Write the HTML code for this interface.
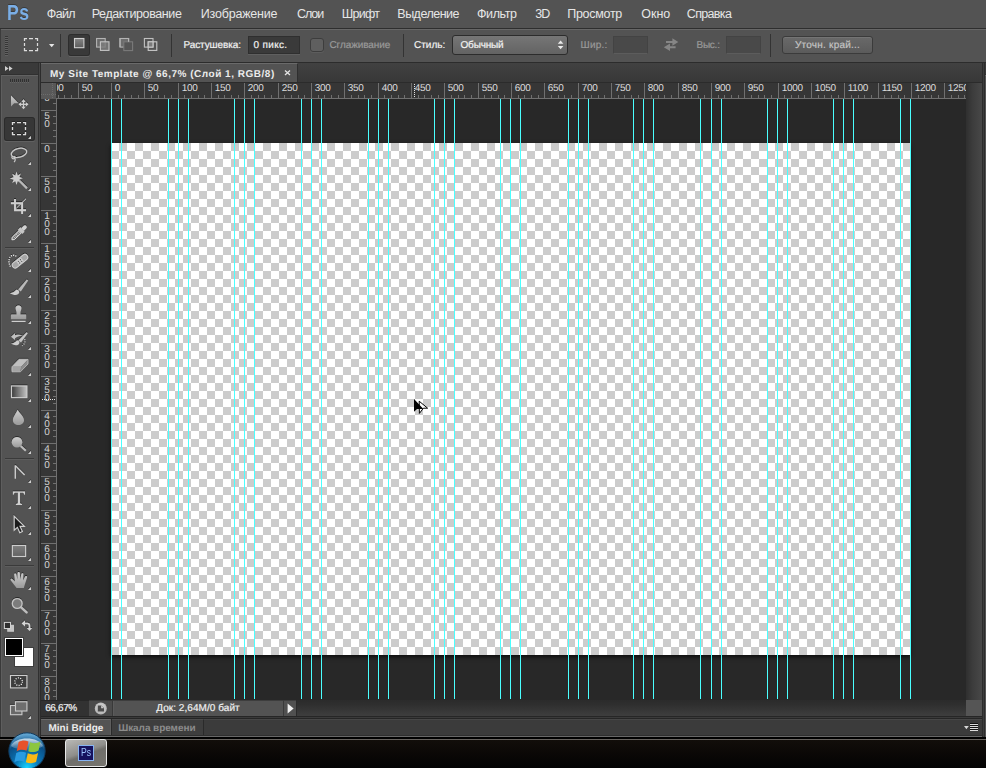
<!DOCTYPE html>
<html><head><meta charset="utf-8"><title>My Site Template</title>
<style>
html,body{margin:0;padding:0;background:#535353;}
body{width:986px;height:768px;overflow:hidden;font-family:"Liberation Sans",sans-serif;}
#app{position:relative;width:986px;height:768px;overflow:hidden;background:#535353;color:#e0e0e0;}
#app div,#app span,#app svg{position:absolute;box-sizing:border-box;}
/* menu */
#menubar{left:0;top:0;width:986px;height:28px;background:#535353;}
#pslogo{left:7px;top:1px;font-size:21.5px;font-weight:bold;color:#7aaee6;line-height:24px;transform:scaleX(.82);transform-origin:0 0;letter-spacing:0.5px;text-shadow:0 -1px 0 rgba(0,0,0,.3);}
.mi{top:6px;font-size:12.5px;line-height:16px;color:#e6e6e6;white-space:nowrap;}
/* options bar */
#optbar{left:0;top:28px;width:986px;height:34px;background:#535353;border-top:1px solid #2e2e2e;}
#optbar .hi{left:0;top:0;width:986px;height:1px;background:#676767;}
.sep{width:1px;background:#333;top:5px;height:23px;}
.ol{text-rendering:geometricPrecision;font-size:10px;line-height:14px;top:10px;white-space:nowrap;color:#f2f2f2;-webkit-text-stroke:0.2px currentColor;}
.dis{color:#9a9a9a;}
/* tools */
#tools{left:0;top:62px;width:39px;height:676px;background:#535353;}
/* doc */
#doc{left:0;top:0;width:986px;height:768px;}
#tabbar{left:41px;top:63px;width:941px;height:20px;background:linear-gradient(#414141,#383838);border-bottom:1px solid #2b2b2b;}
#tab{left:0;top:0;width:257px;height:19px;background:#535353;border-top:1px solid #6a6a6a;border-right:1px solid #2f2f2f;}


#canvasarea{left:57px;top:99px;width:909px;height:601px;background:#282828;overflow:hidden;}
#checker{left:54px;top:44px;width:799px;height:512px;background:repeating-conic-gradient(#cccccc 0 25%,#ffffff 0 50%) 0 0/16px 16px;}
#shadow{left:54px;top:44px;width:799px;height:512px;box-shadow:0 2px 4px rgba(0,0,0,.7);}
#guides{left:-57px;top:0;}
#hruler{left:57px;top:83px;width:909px;height:16px;background:#363636;overflow:hidden;}
.hl{text-rendering:geometricPrecision;letter-spacing:-0.35px;top:1px;font-size:10px;line-height:10px;color:#dcdcdc;white-space:nowrap;}
#rcorner{left:41px;top:83px;width:15px;height:16px;background:#585858;overflow:hidden;}
#vruler{left:41px;top:99px;width:16px;height:601px;background:#363636;overflow:hidden;}
.vl{left:2px;width:8px;text-rendering:geometricPrecision;text-align:center;font-size:10px;line-height:8px;height:8px;color:#d4d4d4;}
.sl{text-rendering:geometricPrecision;-webkit-text-stroke:0.2px currentColor;top:703px;font-size:10px;line-height:12px;color:#f0f0f0;white-space:nowrap;}
.pl{text-rendering:geometricPrecision;top:723px;font-size:10px;line-height:12px;font-weight:bold;color:#ececec;white-space:nowrap;}
.tl{text-rendering:geometricPrecision;top:68px;font-size:10px;font-weight:bold;line-height:14px;color:#ececec;white-space:nowrap;}

</style></head>
<body>
<div id="app">
<div id="menubar">
<span id="pslogo">Ps</span>
<span id="m1" class="mi" style="left:46.80px;letter-spacing:-0.667px;">Файл</span>
<span id="m2" class="mi" style="left:91.70px;letter-spacing:-0.385px;">Редактирование</span>
<span id="m3" class="mi" style="left:200.80px;letter-spacing:-0.200px;">Изображение</span>
<span id="m4" class="mi" style="left:296.90px;letter-spacing:-1.000px;">Слои</span>
<span id="m5" class="mi" style="left:341.80px;letter-spacing:-0.750px;">Шрифт</span>
<span id="m6" class="mi" style="left:397.30px;letter-spacing:-0.500px;">Выделение</span>
<span id="m7" class="mi" style="left:477.00px;letter-spacing:-0.400px;">Фильтр</span>
<span id="m8" class="mi" style="left:535.20px;letter-spacing:-1.000px;">3D</span>
<span id="m9" class="mi" style="left:567.20px;letter-spacing:-0.286px;">Просмотр</span>
<span id="m10" class="mi" style="left:641.20px;letter-spacing:-0.000px;">Окно</span>
<span id="m11" class="mi" style="left:686.80px;letter-spacing:-0.667px;">Справка</span>

</div>
<div id="optbar">
<div class="hi"></div><div style="left:0;top:0;width:1px;height:33px;background:#3c3c3c"></div>
<div class="sep" style="left:60px"></div>
<div class="sep" style="left:171px"></div>
<div id="feather" style="left:248px;top:7px;width:52px;height:18px;background:#3a3a3a;border:1px solid #2f2f2f;box-shadow:0 1px 0 #5f5f5f;"></div>
<div style="left:310px;top:9px;width:14px;height:14px;background:#5f5f5f;border:1px solid #3d3d3d;border-radius:3px;box-shadow:0 1px 0 #5d5d5d;"></div>
<div class="sep" style="left:403px"></div>
<div style="left:452px;top:6px;width:116px;height:20px;background:linear-gradient(#767676,#636363);border:1px solid #2c2c2c;border-radius:3px;"></div>
<div style="left:613px;top:7px;width:35px;height:18px;background:#494949;border:1px solid #434343;border-bottom-color:#5c5c5c;"></div>
<div style="left:726px;top:7px;width:35px;height:18px;background:#494949;border:1px solid #434343;border-bottom-color:#5c5c5c;"></div>
<div class="sep" style="left:770px"></div>
<div style="left:782px;top:7px;width:91px;height:18px;background:linear-gradient(#696969,#5b5b5b);border:1px solid #3b3b3b;border-radius:3px;box-shadow:inset 0 1px 0 #747474;"></div>
<svg id="optsvg" width="986" height="34" viewBox="0 28 986 34" style="left:0;top:-1px">
<defs><linearGradient id="gSq" x1="0" y1="0" x2="0" y2="1"><stop offset="0" stop-color="#868686"/><stop offset="1" stop-color="#5c5c5c"/></linearGradient></defs>
<!-- grip -->
<path d="M5 36.5H8M5 38.5H8M5 40.5H8M5 42.5H8M5 44.5H8M5 46.5H8M5 48.5H8M5 50.5H8M5 52.5H8M5 54.5H8" stroke="#363636" stroke-width="1" shape-rendering="crispEdges"/>
<path d="M5 37.5H8M5 39.5H8M5 41.5H8M5 43.5H8M5 45.5H8M5 47.5H8M5 49.5H8M5 51.5H8M5 53.5H8M5 55.5H8" stroke="#626262" stroke-width="1" shape-rendering="crispEdges"/>
<!-- marquee tool preset -->
<path d="M24 38.5h3M24 50.5h3M29 38.5h4M29 50.5h4M35 38.5h3M35 50.5h3M24.5 38v3M37.5 38v3M24.5 43v3M37.5 43v3M24.5 48v3M37.5 48v3" fill="none" stroke="#dcdcdc" stroke-width="1.25"/>
<path d="M49 44L54.4 44L51.7 47.2Z" fill="#e6e6e6"/>
<!-- mode buttons -->
<rect x="68" y="34" width="22" height="22" rx="3" fill="#393939"/>
<rect x="68.5" y="34.5" width="21" height="21" rx="2.5" fill="none" stroke="#2d2d2d"/>
<path d="M69 56.5H89" stroke="#626262"/>
<rect x="74.5" y="38.5" width="9.4" height="9.2" fill="url(#gSq)" stroke="#cfcfcf" stroke-width="1.1"/>
<!-- add -->
<rect x="96.6" y="38.5" width="8.6" height="8.6" fill="#6a6a6a" stroke="#b4b4b4" stroke-width="1.1"/>
<rect x="100.4" y="41.8" width="8.6" height="8.6" fill="#7c7c7c" fill-opacity=".8" stroke="#c4c4c4" stroke-width="1.1"/>
<!-- subtract -->
<rect x="120" y="38.5" width="8.6" height="8.6" fill="#6c6c6c" stroke="#b4b4b4" stroke-width="1.1"/>
<rect x="123.8" y="41.8" width="8.8" height="8.8" fill="#555" stroke="#7a7a7a" stroke-width="1.1"/>
<path d="M120 47.1V38.5H128.6V41.8" fill="none" stroke="#b4b4b4" stroke-width="1.1"/>
<!-- intersect -->
<rect x="144.4" y="38.5" width="8.6" height="8.6" fill="none" stroke="#c0c0c0" stroke-width="1.1"/>
<rect x="148.2" y="41.8" width="8.6" height="8.6" fill="none" stroke="#c8c8c8" stroke-width="1.1"/>
<rect x="148.2" y="41.8" width="4.8" height="5.3" fill="#7a7a7a" stroke="#c8c8c8" stroke-width="1.1"/>
<!-- dropdown arrows -->
<path d="M557.8 43.8L560.6 40.4L563.4 43.8ZM557.8 46L560.6 49.2L563.4 46Z" fill="#ececec"/>
<!-- swap -->
<path d="M666 41H672.4V38.2L678.3 42L672.4 45.8V43H666ZM675.6 46.3H670V43.5L663.8 47.3L670 51.1V48.3H675.6Z" fill="#868686"/>
</svg>
<span id="o1" class="ol" style="left:183.50px;letter-spacing:-0.100px;">Растушевка:</span>
<span id="o2" class="ol" style="left:253.50px;letter-spacing:0.333px;">0 пикс.</span>
<span id="o3" class="ol dis" style="left:329.50px;letter-spacing:-0.100px;">Сглаживание</span>
<span id="o4" class="ol" style="left:414.00px;letter-spacing:0.000px;">Стиль:</span>
<span id="o5" class="ol" style="left:460.50px;letter-spacing:-0.167px;">Обычный</span>
<span id="o6" class="ol dis" style="left:580.50px;letter-spacing:0.250px;">Шир.:</span>
<span id="o7" class="ol dis" style="left:696.50px;letter-spacing:-0.250px;">Выс.:</span>
<span id="o8" class="ol" style="left:795.00px;letter-spacing:0.231px;color:#c4c4c4">Уточн. край...</span>

</div>
<div id="tools"></div>
<svg id="toolsvg" width="41" height="737" viewBox="0 0 41 737" style="left:0;top:0">
<defs>
<linearGradient id="gIcon" x1="0" y1="0" x2="0" y2="1"><stop offset="0" stop-color="#cfcfcf"/><stop offset="1" stop-color="#9a9a9a"/></linearGradient>
<linearGradient id="gGrad" x1="0" y1="0" x2="1" y2="0"><stop offset="0" stop-color="#3c3c3c"/><stop offset="1" stop-color="#c4c4c4"/></linearGradient>
<linearGradient id="gRect" x1="0" y1="0" x2="0" y2="1"><stop offset="0" stop-color="#7e7e7e"/><stop offset="1" stop-color="#646464"/></linearGradient>
<path id="tri" d="M3 0V3H0Z" fill="#d0d0d0"/>
<filter id="sh" x="-20%" y="-20%" width="140%" height="140%"><feDropShadow dx="0" dy="-1" stdDeviation="0.25" flood-color="#1c1c1c" flood-opacity=".85"/></filter>
</defs>
<!-- panel frame -->
<rect x="0" y="62" width="41" height="676" fill="#434343"/>
<rect x="0" y="62" width="39" height="1" fill="#2e2e2e"/>
<rect x="1" y="63" width="37" height="11" fill="#3a3a3a"/>
<rect x="0" y="63" width="1" height="675" fill="#3a3a3a"/>
<rect x="1" y="74" width="37" height="1" fill="#303030"/>
<rect x="1" y="75" width="37" height="662" fill="#535353"/>
<rect x="1" y="75" width="37" height="1" fill="#626262"/>
<rect x="1" y="75" width="1" height="662" fill="#5e5e5e"/>
<rect x="38" y="63" width="1" height="675" fill="#303030"/>
<rect x="39" y="63" width="1" height="675" fill="#464646"/>
<rect x="40" y="62" width="1" height="676" fill="#2c2c2c"/>

<!-- collapse arrows -->
<path d="M5 66L8.6 68.5L5 71Z M9 66L12.6 68.5L9 71Z" fill="#cfcfcf"/>
<!-- grip -->
<path d="M10.5 79V82M12.5 79V82M14.5 79V82M16.5 79V82M18.5 79V82M20.5 79V82M22.5 79V82M24.5 79V82M26.5 79V82M28.5 79V82" stroke="#303030" stroke-width="1" shape-rendering="crispEdges"/>
<path d="M10 82.5H29" stroke="#646464" stroke-width="1" stroke-dasharray="1 1" shape-rendering="crispEdges"/>
<!-- separator 1 -->
<path d="M5 247.5H34" stroke="#3a3a3a" stroke-width="1" shape-rendering="crispEdges"/>
<path d="M5 248.5H34" stroke="#5d5d5d" stroke-width="1" shape-rendering="crispEdges"/>
<!-- separator 2 -->
<path d="M5 458.5H34" stroke="#3a3a3a" stroke-width="1" shape-rendering="crispEdges"/>
<path d="M5 459.5H34" stroke="#5d5d5d" stroke-width="1" shape-rendering="crispEdges"/>
<!-- separator 3 -->
<path d="M5 565.5H34" stroke="#3a3a3a" stroke-width="1" shape-rendering="crispEdges"/>
<path d="M5 566.5H34" stroke="#5d5d5d" stroke-width="1" shape-rendering="crispEdges"/>
<rect x="4" y="117" width="31" height="24" rx="3" fill="#373737"/>
<rect x="4.5" y="117.5" width="30" height="23" rx="2.5" fill="none" stroke="#2b2b2b"/>
<path d="M4.5 141.5H34.5" stroke="#606060" stroke-width="1"/>
<g filter="url(#sh)">
<!-- 1 move -->
<path d="M11 95.5V106.4L14.2 103.2H18.6Z" fill="url(#gIcon)"/>
<path d="M23.5 100.5V108.2M19.6 104.3H27.4" stroke="#cdcdcd" stroke-width="1.2" fill="none"/><path d="M23.5 99.3L25.6 101.9H21.4ZM23.5 109.3L25.6 106.7H21.4ZM18.5 104.3L21.1 102.2V106.4ZM28.5 104.3L25.9 102.2V106.4Z" fill="#cdcdcd"/>
<!-- 2 marquee (selected) -->
<path d="M12 122.5h3M12 134.5h3M17 122.5h4M17 134.5h4M23 122.5h3M23 134.5h3M12.5 122v3M25.5 122v3M12.5 127v3M25.5 127v3M12.5 132v3M25.5 132v3" fill="none" stroke="#dcdcdc" stroke-width="1.25"/>
<use href="#tri" x="28" y="136"/>
<!-- 3 lasso -->
<ellipse cx="19" cy="152.9" rx="7.9" ry="4.4" transform="rotate(-14 19 152.9)" fill="none" stroke="#c8c8c8" stroke-width="1.3"/>
<path d="M12.2 156.3C11 158.2 13.2 159.6 14.6 158.2C15.8 157 14.2 155.8 13.4 156.6M14.8 158C15.6 159.8 15.2 161.2 14 162.2" fill="none" stroke="#c8c8c8" stroke-width="1.1"/>
<use href="#tri" x="28" y="162"/>
<!-- 4 magic wand -->
<g transform="translate(-0.7 0)"><path d="M17.2 171.6L18.4 175.6L21.6 173.6L20 177L23.6 178.2L20 179.6L21.4 182.6L18.4 181.2L17.2 185L16 181.2L12.8 183L14.4 179.8L10.4 178.4L14.4 177.2L12.8 173.8L16 175.6Z" fill="#cdcdcd"/></g>
<path d="M19.6 181L27 188.4" stroke="#b8b8b8" stroke-width="2.2"/>
<use href="#tri" x="28" y="188"/>
<!-- 5 crop -->
<path d="M15 199V210.2H26M10.9 203.2H22.1V213.9" fill="none" stroke="#cfcfcf" stroke-width="1.9"/>
<path d="M16.4 208.2L26 198.8" stroke="#c8c8c8" stroke-width="1"/>
<use href="#tri" x="28" y="214"/>
<!-- 6 eyedropper -->
<g transform="translate(11.9 239.8) rotate(-44)">
<path d="M0 0L2 -1.6H11.6V1.6H2Z" fill="#787878" stroke="#e6e6e6" stroke-width="0.9"/>
<path d="M3.4 -1.2V1.2M5.2 -1.2V1.2M7 -1.2V1.2M8.8 -1.2V1.2M10.4 -1.2V1.2" stroke="#dcdcdc" stroke-width=".7"/>
<rect x="11.4" y="-3.1" width="3.3" height="6.2" fill="#c6c6c6"/>
<path d="M14.7 -1.8H18.2A1.8 1.8 0 0 1 18.2 1.8H14.7Z" fill="#d2d2d2"/>
</g>
<use href="#tri" x="28" y="240"/>
<!-- 7 healing brush -->
<g transform="rotate(-39 20 261.3)"><rect x="10.9" y="258.4" width="18.2" height="5.8" rx="2.9" fill="#a6a6a6" stroke="#d2d2d2" stroke-width="1"/><rect x="16.9" y="258.8" width="6.2" height="5" fill="#cbcbcb"/><path d="M18.2 259.8h1v1h-1zM20.8 259.8h1v1h-1zM18.2 262h1v1h-1zM20.8 262h1v1h-1z" fill="#3e3e3e"/></g>
<path d="M10.4 266.6C8.4 263.6 8.6 258.6 10.4 256.6C12.2 254.8 15.4 255 16.8 257" fill="none" stroke="#ffffff" stroke-width="1.15" stroke-dasharray="1 1.25"/>
<use href="#tri" x="28" y="269"/>
<!-- 8 brush -->
<path d="M26.8 279.6L28.2 280.6L20.8 291.4L18.2 289.6Z" fill="#bababa"/>
<path d="M9.8 293.2C13.2 293 14.8 291.2 16 290C17.4 289.2 19.6 290.6 19.2 292.6C18.6 295 15 296.2 9.8 293.2Z" fill="#cdcdcd"/>
<use href="#tri" x="28" y="295"/>
<!-- 9 stamp -->
<path d="M18.5 305.6C20.6 305.6 21.8 307.2 21.4 309C21 310.6 20.4 311.4 20.4 313V314.6H25.4C26 314.6 26.2 315 26.2 315.4V319.2H10.9V315.4C10.9 315 11.2 314.6 11.6 314.6H16.6V313C16.6 311.4 16 310.6 15.6 309C15.2 307.2 16.4 305.6 18.5 305.6Z" fill="url(#gIcon)"/>
<path d="M11.6 321.4H25.6" stroke="#cfcfcf" stroke-width="1.2"/>
<use href="#tri" x="28" y="321"/>
<!-- 10 history brush -->
<path d="M26.6 332.2L27.8 333.2L21 342.4L18.4 340.6Z" fill="#c4c4c4"/>
<path d="M11 343.6C14 343.4 15.4 342 16.6 340.8C18 340 19.8 341.4 19.4 343C18.8 345.2 15.4 346.6 11 343.6Z" fill="#cdcdcd"/>
<path d="M11 336.8L15 333.2V335.2C18 334.6 20.8 334.6 23 335.6C20.6 335.8 17.6 336.6 15 338.2V340Z" fill="#c0c0c0"/>
<path d="M24.6 339C25.8 341.4 24.6 344.4 22 345.8" fill="none" stroke="#d0d0d0" stroke-width="1.1" stroke-dasharray="1.1 1.3"/>
<use href="#tri" x="28" y="347"/>
<!-- 11 eraser -->
<path d="M19 359.4H28L21.2 366.8H12Z" fill="#c0c0c0"/>
<path d="M12 366.8H21.2L20.4 371.8H12C11.6 370.2 11.6 368.4 12 366.8Z" fill="#a4a4a4"/>
<path d="M21.2 366.8L28 359.4V364L20.4 371.8Z" fill="#8c8c8c"/>
<path d="M19 359.4H28V364L20.4 371.8H12V366.8Z" fill="none" stroke="#c9c9c9" stroke-width=".7"/>
<use href="#tri" x="28" y="373"/>
<!-- 12 gradient -->
<rect x="11.5" y="386" width="15.4" height="11.6" fill="url(#gGrad)" stroke="#cdcdcd" stroke-width="1.1"/>
<use href="#tri" x="28" y="399"/>
<!-- 13 blur -->
<path d="M17.6 409.8C19.2 413.2 24 416.4 24 420.2C24 423.2 21.4 425 18.4 425C15.4 425 12.9 423.2 12.9 420.2C12.9 416.4 16.4 413.4 17.6 409.8Z" fill="url(#gIcon)"/>
<use href="#tri" x="28" y="425"/>
<!-- 14 dodge -->
<path d="M20.6 446L25.8 450.8" stroke="#bdbdbd" stroke-width="2"/>
<circle cx="17" cy="442.2" r="5.3" fill="url(#gIcon)"/>
<use href="#tri" x="28" y="451"/>
<!-- 15 pen (polygon) -->
<path d="M15.3 478.8V465.6L24.6 475" fill="none" stroke="#d0d0d0" stroke-width="1.3" stroke-linejoin="bevel"/>
<use href="#tri" x="28" y="480"/>
<!-- 16 type -->
<path d="M12.9 491.6H25V494.8H24.2C24 493.4 23.4 492.8 22 492.8H20V502.6C20 503.6 20.4 504 22 504.1V504.9H15.9V504.1C17.5 504 17.9 503.6 17.9 502.6V492.8H15.9C14.5 492.8 13.9 493.4 13.7 494.8H12.9Z" fill="#d0d0d0"/>
<use href="#tri" x="28" y="506"/>
<!-- 17 path selection -->
<path d="M14.2 516.4V530.2L17.4 527.4L19.8 532.8L22.4 531.6L20 526.4H24.4Z" fill="#1e1e1e" stroke="#d0d0d0" stroke-width="1.1" stroke-linejoin="miter"/>
<use href="#tri" x="28" y="532"/>
<!-- 18 rectangle -->
<rect x="12.4" y="545.5" width="13.2" height="11" fill="url(#gRect)" stroke="#cdcdcd" stroke-width="1.1"/>
<use href="#tri" x="28" y="558"/>
<!-- 19 hand -->
<path d="M16.6 588C14.6 585.4 12.4 582.4 10.5 580C10.2 579.2 11.2 578.4 12.2 579L15 581.6L14.2 574.6C14.2 573.4 16 573.2 16.3 574.4L17.4 579.6L17.6 573C17.8 571.8 19.6 571.8 19.8 573L20.2 579.6L21.4 574C21.8 572.8 23.4 573 23.4 574.2L23 580.4L25.2 576.4C25.8 575.4 27.4 576 27.1 577.2C26.2 580.6 24.6 584.6 23.8 588Z" fill="url(#gIcon)"/>
<use href="#tri" x="28" y="587"/>
<!-- 20 zoom -->
<path d="M20.8 607.2L26.6 612.4" stroke="#bdbdbd" stroke-width="2.4" stroke-linecap="round"/>
<circle cx="17.2" cy="603.5" r="4.9" fill="#7b7b7b" stroke="#c4c4c4" stroke-width="1.3"/>
<!-- default colors -->
<rect x="7.2" y="624.8" width="6.8" height="7" fill="#c4c4c4"/>
<rect x="4.4" y="622.4" width="6.1" height="6.1" fill="#2e2e2e" stroke="#d0d0d0" stroke-width="1"/>
<!-- swap -->
<path d="M24.6 623.5H27.4Q29.5 623.5 29.5 625.8V628.4" fill="none" stroke="#d4d4d4" stroke-width="1.5"/><path d="M21.6 623.5L25 620.5V626.5ZM26.7 628H32.3L29.5 631.1Z" fill="#d4d4d4"/>
</g>
<!-- fg/bg -->
<rect x="14.5" y="647.5" width="19" height="19" fill="#ffffff" stroke="#3e3e3e" stroke-width="1"/>
<rect x="4.5" y="637.5" width="19" height="19" fill="#ffffff" stroke="#3e3e3e" stroke-width="1"/>
<rect x="6" y="639" width="16" height="16" fill="#000"/>
<g filter="url(#sh)">
<!-- quick mask -->
<rect x="10.5" y="675.5" width="16.4" height="12.4" fill="#3c3c3c" stroke="#cdcdcd" stroke-width="1.1"/>
<circle cx="18.6" cy="681.7" r="3.8" fill="none" stroke="#ffffff" stroke-width="1.3" stroke-dasharray="1 1.39"/>
<!-- screen mode -->
<rect x="10.5" y="705.5" width="11.4" height="9.2" fill="#686868" stroke="#c8c8c8" stroke-width="1.1"/>
<rect x="15.5" y="701.8" width="11.4" height="9.2" fill="#6e6e6e" stroke="#c8c8c8" stroke-width="1.1"/>
<use href="#tri" x="28" y="716"/>
</g>
</svg>
<div id="doc">
<div id="tabbar"><div id="tab"><svg width="8" height="8" viewBox="0 0 8 8" style="left:243px;top:5px"><path d="M1 1.4L6 6M6 1.4L1 6" stroke="#e4e4e4" stroke-width="1.3" fill="none"/></svg></div></div>
<span id="t1" class="tl" style="left:50.00px;letter-spacing:0.513px;">My Site Template @ 66,7% (Слой 1, RGB/8)</span>
<div id="canvasarea">
<div id="shadow"></div><div id="checker"></div>
<svg id="guides" width="986" height="600" viewBox="0 0 986 600" shape-rendering="crispEdges"><path fill="none" stroke="#4affff" stroke-width="1" d="M111.5 0V600M121.5 0V600M168.5 0V600M178.5 0V600M188.5 0V600M234.5 0V600M244.5 0V600M254.5 0V600M301.5 0V600M311.5 0V600M321.5 0V600M368.5 0V600M378.5 0V600M388.5 0V600M434.5 0V600M444.5 0V600M454.5 0V600M500.5 0V600M510.5 0V600M520.5 0V600M568.5 0V600M578.5 0V600M588.5 0V600M633.5 0V600M643.5 0V600M653.5 0V600M700.5 0V600M711.5 0V600M721.5 0V600M767.5 0V600M777.5 0V600M787.5 0V600M833.5 0V600M843.5 0V600M853.5 0V600M900.5 0V600M910.5 0V600"/></svg>
</div>
<div id="hruler"><svg width="909" height="16" viewBox="0 0 909 16" shape-rendering="crispEdges" style="left:0;top:0"><path stroke="#707070" stroke-width="1" fill="none" d="M0 15.5H909M21.5 0V16M54.5 0V16M87.5 0V16M121.5 0V16M154.5 0V16M187.5 0V16M221.5 0V16M254.5 0V16M287.5 0V16M321.5 0V16M354.5 0V16M387.5 0V16M421.5 0V16M454.5 0V16M487.5 0V16M521.5 0V16M554.5 0V16M587.5 0V16M621.5 0V16M654.5 0V16M687.5 0V16M721.5 0V16M754.5 0V16M787.5 0V16M821.5 0V16M854.5 0V16M887.5 0V16M1.5 12V16M7.5 12V16M14.5 12V16M27.5 12V16M34.5 12V16M41.5 12V16M47.5 12V16M61.5 12V16M67.5 12V16M74.5 12V16M81.5 12V16M94.5 12V16M101.5 12V16M107.5 12V16M114.5 12V16M127.5 12V16M134.5 12V16M141.5 12V16M147.5 12V16M161.5 12V16M167.5 12V16M174.5 12V16M181.5 12V16M194.5 12V16M201.5 12V16M207.5 12V16M214.5 12V16M227.5 12V16M234.5 12V16M241.5 12V16M247.5 12V16M261.5 12V16M267.5 12V16M274.5 12V16M281.5 12V16M294.5 12V16M301.5 12V16M307.5 12V16M314.5 12V16M327.5 12V16M334.5 12V16M341.5 12V16M347.5 12V16M361.5 12V16M367.5 12V16M374.5 12V16M381.5 12V16M394.5 12V16M401.5 12V16M407.5 12V16M414.5 12V16M427.5 12V16M434.5 12V16M441.5 12V16M447.5 12V16M461.5 12V16M467.5 12V16M474.5 12V16M481.5 12V16M494.5 12V16M501.5 12V16M507.5 12V16M514.5 12V16M527.5 12V16M534.5 12V16M541.5 12V16M547.5 12V16M561.5 12V16M567.5 12V16M574.5 12V16M581.5 12V16M594.5 12V16M601.5 12V16M607.5 12V16M614.5 12V16M627.5 12V16M634.5 12V16M641.5 12V16M647.5 12V16M661.5 12V16M667.5 12V16M674.5 12V16M681.5 12V16M694.5 12V16M701.5 12V16M707.5 12V16M714.5 12V16M727.5 12V16M734.5 12V16M741.5 12V16M747.5 12V16M761.5 12V16M767.5 12V16M774.5 12V16M781.5 12V16M794.5 12V16M801.5 12V16M807.5 12V16M814.5 12V16M827.5 12V16M834.5 12V16M841.5 12V16M847.5 12V16M861.5 12V16M867.5 12V16M874.5 12V16M881.5 12V16M894.5 12V16M901.5 12V16M907.5 12V16"/></svg><span class="hl" style="left:-9.2px">100</span><span class="hl" style="left:24.8px">50</span><span class="hl" style="left:57.8px">0</span><span class="hl" style="left:90.8px">50</span><span class="hl" style="left:124.8px">100</span><span class="hl" style="left:157.8px">150</span><span class="hl" style="left:190.8px">200</span><span class="hl" style="left:224.8px">250</span><span class="hl" style="left:257.8px">300</span><span class="hl" style="left:290.8px">350</span><span class="hl" style="left:324.8px">400</span><span class="hl" style="left:357.8px">450</span><span class="hl" style="left:390.8px">500</span><span class="hl" style="left:424.8px">550</span><span class="hl" style="left:457.8px">600</span><span class="hl" style="left:490.8px">650</span><span class="hl" style="left:524.8px">700</span><span class="hl" style="left:557.8px">750</span><span class="hl" style="left:590.8px">800</span><span class="hl" style="left:624.8px">850</span><span class="hl" style="left:657.8px">900</span><span class="hl" style="left:690.8px">950</span><span class="hl" style="left:724.8px">1000</span><span class="hl" style="left:757.8px">1050</span><span class="hl" style="left:790.8px">1100</span><span class="hl" style="left:824.8px">1150</span><span class="hl" style="left:857.8px">1200</span><span class="hl" style="left:890.8px">1250</span><svg width="1" height="16" viewBox="0 0 1 16" shape-rendering="crispEdges" style="left:357px;top:0"><path d="M0.5 1V15" stroke="#e6e6e6" stroke-width="1" stroke-dasharray="1 1"/></svg></div>
<div style="left:56px;top:83px;width:1px;height:16px;background:#363636;border-bottom:1px solid #707070"></div><div id="rcorner"><svg width="16" height="16" viewBox="0 0 16 16" shape-rendering="crispEdges" style="left:0;top:0"><path d="M11.5 0V16M0 11.5H16" stroke="#6c6c6c" stroke-width="1" stroke-dasharray="1 1" fill="none"/></svg></div>
<div id="vruler"><svg width="16" height="601" viewBox="0 0 16 601" shape-rendering="crispEdges" style="left:0;top:0"><path stroke="#707070" stroke-width="1" fill="none" d="M15.5 0V601M0 11.5H16M0 44.5H16M0 77.5H16M0 111.5H16M0 144.5H16M0 177.5H16M0 211.5H16M0 244.5H16M0 277.5H16M0 311.5H16M0 344.5H16M0 377.5H16M0 411.5H16M0 444.5H16M0 477.5H16M0 511.5H16M0 544.5H16M0 577.5H16M12 4.5H16M12 17.5H16M12 24.5H16M12 31.5H16M12 37.5H16M12 51.5H16M12 57.5H16M12 64.5H16M12 71.5H16M12 84.5H16M12 91.5H16M12 97.5H16M12 104.5H16M12 117.5H16M12 124.5H16M12 131.5H16M12 137.5H16M12 151.5H16M12 157.5H16M12 164.5H16M12 171.5H16M12 184.5H16M12 191.5H16M12 197.5H16M12 204.5H16M12 217.5H16M12 224.5H16M12 231.5H16M12 237.5H16M12 251.5H16M12 257.5H16M12 264.5H16M12 271.5H16M12 284.5H16M12 291.5H16M12 297.5H16M12 304.5H16M12 317.5H16M12 324.5H16M12 331.5H16M12 337.5H16M12 351.5H16M12 357.5H16M12 364.5H16M12 371.5H16M12 384.5H16M12 391.5H16M12 397.5H16M12 404.5H16M12 417.5H16M12 424.5H16M12 431.5H16M12 437.5H16M12 451.5H16M12 457.5H16M12 464.5H16M12 471.5H16M12 484.5H16M12 491.5H16M12 497.5H16M12 504.5H16M12 517.5H16M12 524.5H16M12 531.5H16M12 537.5H16M12 551.5H16M12 557.5H16M12 564.5H16M12 571.5H16M12 584.5H16M12 591.5H16M12 597.5H16"/></svg><span class="vl" style="top:-20px">1</span><span class="vl" style="top:-12px">0</span><span class="vl" style="top:-4px">0</span><span class="vl" style="top:14px">5</span><span class="vl" style="top:22px">0</span><span class="vl" style="top:47px">0</span><span class="vl" style="top:80px">5</span><span class="vl" style="top:88px">0</span><span class="vl" style="top:114px">1</span><span class="vl" style="top:122px">0</span><span class="vl" style="top:130px">0</span><span class="vl" style="top:147px">1</span><span class="vl" style="top:155px">5</span><span class="vl" style="top:163px">0</span><span class="vl" style="top:180px">2</span><span class="vl" style="top:188px">0</span><span class="vl" style="top:196px">0</span><span class="vl" style="top:214px">2</span><span class="vl" style="top:222px">5</span><span class="vl" style="top:230px">0</span><span class="vl" style="top:247px">3</span><span class="vl" style="top:255px">0</span><span class="vl" style="top:263px">0</span><span class="vl" style="top:280px">3</span><span class="vl" style="top:288px">5</span><span class="vl" style="top:296px">0</span><span class="vl" style="top:314px">4</span><span class="vl" style="top:322px">0</span><span class="vl" style="top:330px">0</span><span class="vl" style="top:347px">4</span><span class="vl" style="top:355px">5</span><span class="vl" style="top:363px">0</span><span class="vl" style="top:380px">5</span><span class="vl" style="top:388px">0</span><span class="vl" style="top:396px">0</span><span class="vl" style="top:414px">5</span><span class="vl" style="top:422px">5</span><span class="vl" style="top:430px">0</span><span class="vl" style="top:447px">6</span><span class="vl" style="top:455px">0</span><span class="vl" style="top:463px">0</span><span class="vl" style="top:480px">6</span><span class="vl" style="top:488px">5</span><span class="vl" style="top:496px">0</span><span class="vl" style="top:514px">7</span><span class="vl" style="top:522px">0</span><span class="vl" style="top:530px">0</span><span class="vl" style="top:547px">7</span><span class="vl" style="top:555px">5</span><span class="vl" style="top:563px">0</span><span class="vl" style="top:580px">8</span><span class="vl" style="top:588px">0</span><span class="vl" style="top:596px">0</span><span class="vl" style="top:614px">8</span><span class="vl" style="top:622px">5</span><span class="vl" style="top:630px">0</span><svg width="16" height="1" viewBox="0 0 16 1" shape-rendering="crispEdges" style="left:0;top:300px"><path d="M1 0.5H14" stroke="#e6e6e6" stroke-width="1" stroke-dasharray="1 1"/></svg></div>
<div id="vscroll" style="left:966px;top:83px;width:16px;height:617px;background:linear-gradient(90deg,#2f2f2f,#3c3c3c 40%,#484848);"></div>
<div id="statusbar" style="left:41px;top:700px;width:941px;height:16px;background:linear-gradient(#2b2b2b,#2f2f2f 30%,#3e3e3e);">
 <div style="left:0;top:0;width:48px;height:16px;background:#323232;border-top:1px solid #272727;"></div>
 <div style="left:48px;top:0;width:23px;height:16px;background:#4b4b4b;border-top:1px solid #3a3a3a;"></div>
 <div style="left:71px;top:0;width:171px;height:16px;background:#535353;border-left:1px solid #393939;border-top:1px solid #3d3d3d;"></div>
 <div style="left:72px;top:1px;width:1px;height:15px;background:#5b5b5b;"></div>
 <div style="left:242px;top:0;width:13px;height:16px;background:#505050;border-left:1px solid #393939;border-top:1px solid #3d3d3d;"></div>
 <div style="left:255px;top:0;width:1px;height:16px;background:#2a2a2a;"></div>
 <svg width="941" height="16" viewBox="0 0 941 16" style="left:0;top:0">
  <defs><radialGradient id="gDoc" cx=".5" cy=".4" r=".6"><stop offset="0" stop-color="#d8d8d8"/><stop offset="1" stop-color="#b4b4b4"/></radialGradient></defs>
  <circle cx="59.8" cy="8.4" r="6" fill="url(#gDoc)"/>
  <path d="M56.8 5.4H60.4L63 8V11.6H56.8Z" fill="#4c4c4c"/>
  <path d="M60.2 5.6V8.2H62.8Z" fill="#d0d0d0"/>
  <path d="M246.6 3.4L252.6 8.4L246.6 13.4Z" fill="#f0f0f0"/>
 </svg>
 <div style="left:925px;top:0px;width:16px;height:16px;background:#555555;"></div>
</div>
<div style="left:41px;top:716px;width:941px;height:3px;background:linear-gradient(#262626 0,#262626 1px,#3a3a3a 1px,#3a3a3a 2px,#262626 2px);"></div>
<div id="panelbar" style="left:41px;top:719px;width:941px;height:16px;background:#3b3b3b;border-top:1px solid #474747;">
 <div style="left:0;top:-1px;width:70px;height:16px;background:#535353;border-top:1px solid #6a6a6a;border-right:1px solid #5e5e5e;"></div>
 <div style="left:70px;top:-1px;width:1px;height:16px;background:#2a2a2a;"></div>
 <div style="left:71px;top:-1px;width:92px;height:16px;background:#3e3e3e;border-top:1px solid #4c4c4c;border-right:1px solid #2a2a2a;"></div>
 <svg width="941" height="16" viewBox="0 0 941 16" style="left:0;top:-1px">
  <path d="M923 7L927.8 7L925.4 10.2Z" fill="#d8d8d8"/>
  <path d="M929 4.5H937M929 6.5H937M929 8.5H937M929 10.5H937" stroke="#141414" stroke-width="1" shape-rendering="crispEdges"/><path d="M929 5.5H937M929 7.5H937M929 9.5H937M929 11.5H937" stroke="#dcdcdc" stroke-width="1" shape-rendering="crispEdges"/>
 </svg>
</div>
<div style="left:41px;top:735px;width:941px;height:1px;background:#2f2f2f;"></div>
<div style="left:41px;top:736px;width:941px;height:1px;background:#686868;"></div>
<div style="left:0;top:62px;width:986px;height:1px;background:#2c2c2c;"></div>
<div id="rightedge" style="left:982px;top:63px;width:4px;height:674px;background:#3c3c3c;">
 <div style="left:0;top:0;width:1px;height:674px;background:#2c2c2c;"></div>
 <div style="left:2px;top:0;width:1px;height:674px;background:#2c2c2c;"></div>
 <div style="left:3px;top:0;width:1px;height:11px;background:#3a3a3a;"></div>
 <div style="left:3px;top:11px;width:1px;height:1px;background:#2e2e2e;"></div>
 <div style="left:3px;top:12px;width:1px;height:1px;background:#6a6a6a;"></div>
 <div style="left:3px;top:13px;width:1px;height:661px;background:#535353;"></div>
</div>
<span id="s1" class="sl" style="left:45.20px;letter-spacing:-0.380px;">66,67%</span>
<span id="s2" class="sl" style="left:156.20px;letter-spacing:0.056px;">Док: 2,64M/0 байт</span>
<span id="s3" class="pl" style="left:48.40px;letter-spacing:0.060px;">Mini Bridge</span>
<span id="s4" class="pl" style="left:118.20px;letter-spacing:-0.067px;color:#8c8c8c">Шкала времени</span>

</div>
<div id="taskbar" style="left:0;top:737px;width:986px;height:31px;background:linear-gradient(#000 0,#000 2px,#67635f 2px,#67635f 3px,#120e0a 3px,#0c0907 45%,#030303 100%);"></div>
<div id="taskbtn" style="left:65px;top:739px;width:42px;height:28px;border-radius:3px;border:1px solid #e8e8e8;background:linear-gradient(160deg,#b9b9b6,#8e8d8a 45%,#6f6e6a 55%,#77756f);"></div>
<div id="psicon" style="left:78px;top:745px;width:16px;height:16px;background:#16125e;border:1px solid #86b3f2;"></div>
<span id="pstxt" style="left:81.4px;top:745.5px;font-size:10.5px;line-height:13px;color:#9cc4ff;transform:scaleX(.82);transform-origin:0 0;">Ps</span>
<svg id="orb" width="40" height="36" viewBox="0 0 40 36" style="left:7px;top:732px">
<defs>
<radialGradient id="orbg" cx="0.5" cy="0.95" r="0.9"><stop offset="0" stop-color="#19d4ff"/><stop offset="0.35" stop-color="#0a78b8"/><stop offset="0.75" stop-color="#0a4f86"/><stop offset="1" stop-color="#5fa3d0"/></radialGradient>
<linearGradient id="orbh" x1="0" y1="0" x2="0" y2="1"><stop offset="0" stop-color="#fff" stop-opacity=".75"/><stop offset="1" stop-color="#fff" stop-opacity=".1"/></linearGradient>
</defs>
<circle cx="20" cy="19" r="18.2" fill="url(#orbg)" stroke="#123a5c" stroke-width="1"/>
<path d="M4 14C8 4 32 4 36 14C30 19 10 19 4 14Z" fill="url(#orbh)"/>
<g transform="translate(20.4 19.2) scale(1.2) translate(-18.7 -17.2)"><path d="M11.4 9.6C14.4 7.8 17 8 19.6 9.2L18 16.8C15.6 15.6 12.6 15.6 9.8 17.2Z" fill="#e8512a"/>
<path d="M21 9.8C23.6 11 26.6 11 29.6 9.2L28 16.6C25 18.4 22.2 18.2 19.4 17.2Z" fill="#8cc63e"/>
<path d="M9.4 18.8C12.4 17.2 15.2 17.4 17.6 18.4L16 26C13.4 24.8 10.6 24.8 7.8 26.4Z" fill="#2a9be0"/>
<path d="M19 19C21.8 20.2 24.6 20.2 27.6 18.6L26 26C23 27.6 20.2 27.4 17.4 26.4Z" fill="#f9b814"/></g>
</svg>
<svg id="cursor" width="16" height="18" viewBox="0 0 16 18" style="left:413px;top:398px">
<path d="M6.2 3.2L14.6 10.2H10.4L6.4 15.4Z" fill="#fff" stroke="#000" stroke-width="1"/>
<path d="M1 1V13.8L4 11H10.4Z" fill="#000"/>
</svg>
</div>
</body></html>
